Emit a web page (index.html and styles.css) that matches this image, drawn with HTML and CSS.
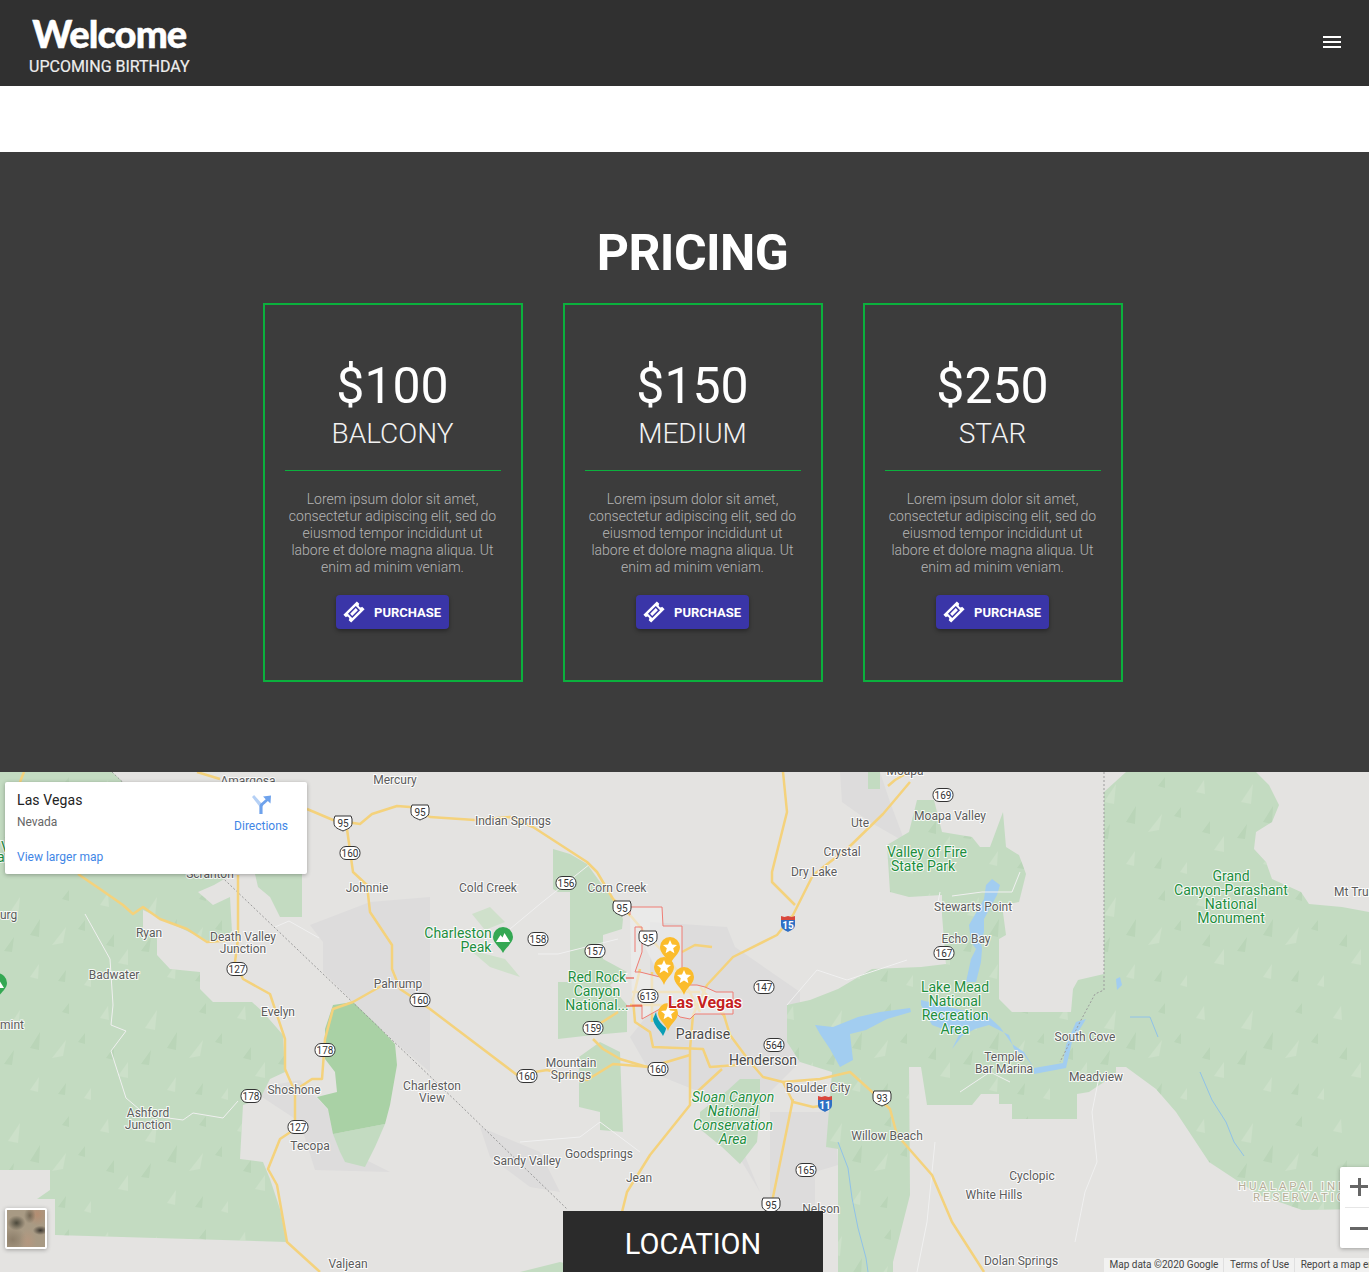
FILE: index.html
```html
<!DOCTYPE html>
<html lang="en">
<head>
  <meta charset="UTF-8">
  <title>Welcome - Upcoming Birthday</title>
  <link rel="stylesheet" href="styles.css">
</head>
<body>
  <header class="topbar">
    <div class="brand">
      <div class="brand-name">Welcome</div>
      <div class="brand-sub">UPCOMING BIRTHDAY</div>
    </div>
    <button class="menu-btn" aria-label="menu"><span></span><span></span><span></span></button>
  </header>

  <div class="spacer"></div>

  <section class="pricing">
    <h2>PRICING</h2>
    <div class="cards">
      <div class="card">
        <div class="price">$100</div>
        <div class="tier">BALCONY</div>
        <hr>
        <p>Lorem ipsum dolor sit amet, consectetur adipiscing elit, sed do eiusmod tempor incididunt ut labore et dolore magna aliqua. Ut enim ad minim veniam.</p>
        <button class="buy">
          <svg viewBox="0 0 24 24" width="24" height="24"><path transform="rotate(-45 12 12)" fill-rule="evenodd" d="M2.500 6.500H21.500V10a2 2 0 0 0 0 4V17.500H2.500V14a2 2 0 0 0 0-4z M6.500 9H17.500V15H6.500z M8 10.500V13.500H16V10.500z"/></svg>
          PURCHASE
        </button>
      </div>
      <div class="card">
        <div class="price">$150</div>
        <div class="tier">MEDIUM</div>
        <hr>
        <p>Lorem ipsum dolor sit amet, consectetur adipiscing elit, sed do eiusmod tempor incididunt ut labore et dolore magna aliqua. Ut enim ad minim veniam.</p>
        <button class="buy">
          <svg viewBox="0 0 24 24" width="24" height="24"><path transform="rotate(-45 12 12)" fill-rule="evenodd" d="M2.500 6.500H21.500V10a2 2 0 0 0 0 4V17.500H2.500V14a2 2 0 0 0 0-4z M6.500 9H17.500V15H6.500z M8 10.500V13.500H16V10.500z"/></svg>
          PURCHASE
        </button>
      </div>
      <div class="card">
        <div class="price">$250</div>
        <div class="tier">STAR</div>
        <hr>
        <p>Lorem ipsum dolor sit amet, consectetur adipiscing elit, sed do eiusmod tempor incididunt ut labore et dolore magna aliqua. Ut enim ad minim veniam.</p>
        <button class="buy">
          <svg viewBox="0 0 24 24" width="24" height="24"><path transform="rotate(-45 12 12)" fill-rule="evenodd" d="M2.500 6.500H21.500V10a2 2 0 0 0 0 4V17.500H2.500V14a2 2 0 0 0 0-4z M6.500 9H17.500V15H6.500z M8 10.500V13.500H16V10.500z"/></svg>
          PURCHASE
        </button>
      </div>
    </div>
  </section>

  <section class="map">
    <svg class="map-canvas" viewBox="0 0 1369 500" width="1369" height="500">
      <defs>
        <pattern id="shade" width="137" height="113" patternUnits="userSpaceOnUse">
          <path class="hill-lt" d="M8 30 20 12l-2 20zM52 60l14-18-3 16zM100 20l8-12 1 14zM118 78l10-14v16zM30 92l9-13-1 15zM84 100l7-10v12z"/>
          <path class="hill-dk" d="M30 50 40 34l-1 18zM4 66 14 52l-2 15zM78 44l7-9v11zM106 60l8-11v13zM58 96l8-11-1 12zM62 14l7-9v11z"/>
        </pattern>
        <polygon id="parkWest" points="0,0 112,0 125,12 233,102 214,113 198,120 213,133 230,125 232,160 210,170 143,138 143,157 157,160 157,183 170,197 200,200 200,217 213,230 252,230 263,240 283,263 285,300 270,307 260,327 243,333 240,387 263,390 270,407 280,437 287,470 55,463 55,427 37,427 50,418 50,398 0,398"/>
        <polygon id="parkEast" points="1104,20 1126,0 1256,0 1269,13 1279,33 1272,50 1256,60 1254,77 1266,90 1272,107 1301,120 1309,132 1342,135 1369,140 1369,437 1302,438 1259,423 1209,390 1176,340 1156,317 1126,295 1116,295 1116,302 1089,320 1077,322 1077,347 1012,347 1012,332 999,332 999,322 981,322 972,333 927,333 921,295 909,295 910,423 893,490 893,500 838,500 838,377 826,375 832,300 800,290 787,270 787,233 810,228 838,217 872,197 921,195 946,192 942,143 942,123 909,125 890,120 887,73 909,60 917,28 934,28 942,60 972,65 980,75 990,75 1003,40 1006,75 1019,83 1026,102 1019,130 1002,133 1006,163 999,167 999,227 1012,240 1071,240 1073,217 1078,208 1104,202"/>
        <g id="pin">
          <path class="pin-body" d="M0 18C-2 11-10 7-10 0a10 10 0 0 1 20 0C10 7 2 11 0 18z"/>
          <path class="pin-star" d="m0-7 2 4.600 5 .4-3.800 3.300 1.200 4.900L0 3.600l-4.400 2.600 1.200-4.900L-7-2l5-.4z"/>
        </g>
      </defs>

      <rect class="land" width="1369" height="500"/>

      <!-- grey built up areas -->
      <polygon class="urban" points="310,153 370,130 430,125 430,300 395,270 353,230 323,200 323,170"/>
      <polygon class="urban" points="262,315 300,308 330,340 350,380 390,400 315,398 300,350 262,325"/>
      <polygon class="urban" points="31,354 90,358 108,390 60,375 33,370"/>
      <polygon class="urban" points="650,150 727,155 735,175 800,220 800,290 770,320 735,360 760,420 700,320 650,300 630,265 650,240"/>
      <polygon class="urban" points="770,340 835,340 838,393 815,400 815,450 770,450"/>
      <polygon class="urban" points="840,0 880,0 890,30 905,70 870,50 842,30"/>
      <polygon class="urban" points="480,355 540,380 560,420 530,415 490,385"/>

      <!-- parks -->
      <use href="#parkWest" class="park"/>
      <use href="#parkWest" class="park-shade"/>
      <use href="#parkEast" class="park"/>
      <use href="#parkEast" class="park-shade"/>
      <polygon class="park" points="255,102 302,102 302,145 280,145 270,125 258,115"/>
      <polygon class="park" points="553,77 570,82 587,92 600,110 613,127 623,147 622,157 603,163 603,187 627,200 610,213 627,233 627,260 593,263 558,267 558,210 570,210 570,120 558,120 553,117"/>
      <polygon class="park" points="579,285 600,270 620,280 623,360 600,358 600,340 579,335"/>
      <polygon class="park" points="728,318 740,307 760,307 760,340 757,370 740,392 722,375 700,357 700,340"/>
      <polygon class="park" points="868,0 880,0 880,17 868,17"/>
      <polygon class="park" points="333,362 385,352 375,375 365,395 345,390 340,380"/>
      <polygon class="park" points="0,0 40,0 30,20 0,20"/>
      <polygon class="park" points="520,500 560,490 600,500"/>
      <polygon class="park-faint" points="472,142 490,135 505,150 485,158"/>
      <polygon class="park-faint" points="470,178 505,187 520,205 490,195"/>
      <polygon class="park-dark" points="333,233 353,230 377,253 395,272 397,293 390,333 385,352 333,362 328,337 317,325 337,320 335,300 325,287 325,257"/>

      <!-- water -->
      <polygon class="water" points="815,253 833,255 858,245 880,240 910,236 911,240 887,247 866,258 850,262 853,288 840,295 830,277 820,262"/>
      <polygon class="water" points="992,107 1000,113 997,123 984,147 984,160 981,170 982,177 981,190 976,210 966,210 971,187 976,177 971,170 969,153 984,127 986,113"/>
      <polygon class="water" points="921,233 932,253 959,263 952,277 962,264 975,257 989,253 1009,263 1014,277 1024,283 1034,296 1034,302 1066,296 1072,270 1086,247 1076,250 1066,273 1063,291 1034,296 1024,280 1012,272 1000,255 989,245 921,228"/>
      <polygon class="water" points="1116,207 1120,205 1122,213 1117,218"/>
      <path class="creek" d="M1200 300l12 28 14 22 8 20 10 14M1130 245h20l8 20M838 370l10 26 4 30 6 30 8 30 2 14"/>

      <!-- state line -->
      <path class="border" d="M112 0 460 333 567 437M1104 0V218l-9 4-15 28-20 40"/>

      <!-- minor roads -->
      <path class="minor" d="M85 142l25 45 3 46-2 20 15 6-15 20 15 47 20 17 37 5 10-7 30 5 15-17M275 155l14-6 30 17M590 92l-50 40-30 25M538 182h20l60-15M940 120l-4 20M787 233l30-35 30 10 60-20M935 370l-8 80-10 50M960 320l30-20 20 10M1100 300l-8 40 5 50-12 30-10 50M1020 100l-8 20h-30l-30 4M640 380l-40-30-20 15-60 5"/>

      <!-- highways -->
      <g class="roads">
        <path d="M307 37 333 48 360 52 372 42 397 34 410 35 430 45 475 48 510 45 533 55 587 90 597 100 613 127 630 143 647 163 663 180 682 205 700 240"/>
        <path d="M347 57 353 100 367 113 370 140 392 173 392 197 400 217 430 237 517 303 547 298 587 308 613 292 650 295 690 283"/>
        <path d="M238 103V167L235 190 243 207 270 222 285 267 285 297 295 320V357L280 367 268 397 277 413 287 470 320 500"/>
        <path d="M78 102 100 117 123 133 133 142 143 135 160 147 187 157 207 170 235 168"/>
        <path d="M383 213 353 230 333 237 325 267 322 307 312 307 300 315"/>
        <path d="M197 0 220 7M20 10 24 0"/>
        <path d="M910 10 883 42 847 77 813 103 793 143 777 163 733 185 707 213 693 243 690 277V333L650 383 627 420 622 440"/>
        <path d="M783 0 787 40 772 100V110L795 133"/>
        <path d="M640 197 633 227 635 250 650 260 653 275 703 277 710 295 737 293"/>
        <path d="M723 240 730 263 750 290 763 305 783 310 793 330 813 335 827 333"/>
        <path d="M783 310 820 307 850 300 870 318 890 337 897 363 932 403 952 450 984 500"/>
        <path d="M793 327 772 430"/>
        <path d="M593 267 603 277 620 287 647 295M593 256 618 240"/>
        <path d="M632 220H700M630 233H725M682 180 695 173 712 175M652 200V250M722 297 697 320M700 215 725 245"/>
        <path d="M909 0 895 8 888 14"/>
      </g>

      <!-- city limits -->
      <path class="limits" d="M630 143 630 135H662L663 154H682V213H697L705 215 716 220H733V242H695L690 247 680 245 667 233 642 247V233H632M635 155H642V180L635 200H640L660 205M635 155V180"/>
      <path class="limits-hard" d="M626 206h8M626 234h16"/>

      <!-- labels -->
      <g class="label">
        <text x="248" y="13">Amargosa</text><text x="395" y="12">Mercury</text>
        <text x="513" y="53">Indian Springs</text><text x="860" y="55">Ute</text>
        <text x="842" y="84">Crystal</text><text x="814" y="104">Dry Lake</text>
        <text x="950" y="48">Moapa Valley</text><text x="905" y="3">Moapa</text>
        <text x="367" y="120">Johnnie</text><text x="488" y="120">Cold Creek</text>
        <text x="617" y="120">Corn Creek</text><text x="210" y="106">Scranton</text>
        <text x="973" y="139">Stewarts Point</text><text x="966" y="171">Echo Bay</text>
        <text x="149" y="165">Ryan</text><text x="243" y="169">Death Valley</text>
        <text x="243" y="181">Junction</text><text x="114" y="207">Badwater</text>
        <text x="398" y="216">Pahrump</text><text x="278" y="244">Evelyn</text>
        <text class="start" x="0" y="147">urg</text><text class="start" x="0" y="257">mint</text>
        <text x="818" y="320">Boulder City</text><text x="1004" y="289">Temple</text>
        <text x="1004" y="301">Bar Marina</text><text x="1085" y="269">South Cove</text>
        <text x="1096" y="309">Meadview</text><text x="294" y="322">Shoshone</text>
        <text x="432" y="318">Charleston</text><text x="432" y="330">View</text>
        <text x="571" y="295">Mountain</text><text x="571" y="307">Springs</text>
        <text x="148" y="345">Ashford</text><text x="148" y="357">Junction</text>
        <text x="310" y="378">Tecopa</text><text x="527" y="393">Sandy Valley</text>
        <text x="599" y="386">Goodsprings</text><text x="639" y="410">Jean</text>
        <text x="887" y="368">Willow Beach</text><text x="1032" y="408">Cyclopic</text>
        <text x="994" y="427">White Hills</text><text x="1021" y="493">Dolan Springs</text>
        <text x="821" y="441">Nelson</text><text x="348" y="496">Valjean</text>
        <text class="start" x="1334" y="124">Mt Trumbull</text>
      </g>
      <g class="label label-big">
        <text x="703" y="267">Paradise</text><text x="763" y="293">Henderson</text>
      </g>
      <g class="label label-park">
        <text class="start" x="1" y="80">V</text><text class="start" x="-3" y="90">a</text>
        <text x="458" y="166">Charleston</text><text x="476" y="180">Peak</text>
        <text x="597" y="210">Red Rock</text><text x="597" y="224">Canyon</text><text x="597" y="238">National...</text>
        <text x="927" y="85">Valley of Fire</text><text x="923" y="99">State Park</text>
        <text x="1231" y="109">Grand</text><text x="1231" y="123">Canyon-Parashant</text><text x="1231" y="137">National</text><text x="1231" y="151">Monument</text>
        <text x="955" y="220">Lake Mead</text><text x="955" y="234">National</text><text x="955" y="248">Recreation</text><text x="955" y="262">Area</text>
        <text class="ital" x="733" y="330">Sloan Canyon</text><text class="ital" x="733" y="344">National</text><text class="ital" x="733" y="358">Conservation</text><text class="ital" x="733" y="372">Area</text>
      </g>
      <g class="label label-res">
        <text class="start" x="1238" y="418">HUALAPAI IND</text><text class="start" x="1253" y="429">RESERVATIC</text>
      </g>

      <!-- route shields -->
      <g class="shield">
        <g transform="translate(343 51)"><path d="M-8-7h16l1 3v4c0 5-5 6-9 8-4-2-9-3-9-8v-4z"/><text y="3.5">95</text></g>
        <g transform="translate(420 40)"><path d="M-8-7h16l1 3v4c0 5-5 6-9 8-4-2-9-3-9-8v-4z"/><text y="3.5">95</text></g>
        <g transform="translate(622 136)"><path d="M-8-7h16l1 3v4c0 5-5 6-9 8-4-2-9-3-9-8v-4z"/><text y="3.5">95</text></g>
        <g transform="translate(648 166)"><path d="M-8-7h16l1 3v4c0 5-5 6-9 8-4-2-9-3-9-8v-4z"/><text y="3.5">95</text></g>
        <g transform="translate(771 433)"><path d="M-8-7h16l1 3v4c0 5-5 6-9 8-4-2-9-3-9-8v-4z"/><text y="3.5">95</text></g>
        <g transform="translate(882 326)"><path d="M-8-7h16l1 3v4c0 5-5 6-9 8-4-2-9-3-9-8v-4z"/><text y="3.5">93</text></g>
        <g transform="translate(350 81)"><rect x="-10" y="-6.5" width="20" height="13" rx="6"/><text y="3.5">160</text></g>
        <g transform="translate(420 228)"><rect x="-10" y="-6.5" width="20" height="13" rx="6"/><text y="3.5">160</text></g>
        <g transform="translate(527 304)"><rect x="-10" y="-6.5" width="20" height="13" rx="6"/><text y="3.5">160</text></g>
        <g transform="translate(658 297)"><rect x="-10" y="-6.5" width="20" height="13" rx="6"/><text y="3.5">160</text></g>
        <g transform="translate(237 197)"><rect x="-10" y="-6.5" width="20" height="13" rx="6"/><text y="3.5">127</text></g>
        <g transform="translate(298 355)"><rect x="-10" y="-6.5" width="20" height="13" rx="6"/><text y="3.5">127</text></g>
        <g transform="translate(325 278)"><rect x="-10" y="-6.5" width="20" height="13" rx="6"/><text y="3.5">178</text></g>
        <g transform="translate(251 324)"><rect x="-10" y="-6.5" width="20" height="13" rx="6"/><text y="3.5">178</text></g>
        <g transform="translate(566 111)"><rect x="-10" y="-6.5" width="20" height="13" rx="6"/><text y="3.5">156</text></g>
        <g transform="translate(538 167)"><rect x="-10" y="-6.5" width="20" height="13" rx="6"/><text y="3.5">158</text></g>
        <g transform="translate(595 179)"><rect x="-10" y="-6.5" width="20" height="13" rx="6"/><text y="3.5">157</text></g>
        <g transform="translate(648 224)"><rect x="-10" y="-6.5" width="20" height="13" rx="6"/><text y="3.5">613</text></g>
        <g transform="translate(593 256)"><rect x="-10" y="-6.5" width="20" height="13" rx="6"/><text y="3.5">159</text></g>
        <g transform="translate(764 215)"><rect x="-10" y="-6.5" width="20" height="13" rx="6"/><text y="3.5">147</text></g>
        <g transform="translate(774 273)"><rect x="-10" y="-6.5" width="20" height="13" rx="6"/><text y="3.5">564</text></g>
        <g transform="translate(806 398)"><rect x="-10" y="-6.5" width="20" height="13" rx="6"/><text y="3.5">165</text></g>
        <g transform="translate(943 23)"><rect x="-10" y="-6.5" width="20" height="13" rx="6"/><text y="3.5">169</text></g>
        <g transform="translate(944 181)"><rect x="-10" y="-6.5" width="20" height="13" rx="6"/><text y="3.5">167</text></g>
      </g>
      <g class="inter">
        <g transform="translate(788 152)"><path class="i-blue" d="M-7-6H7V1C7 5 3 6 0 8-3 6-7 5-7 1z"/><path class="i-red" d="M-7-8-3.500-7 0-8 3.500-7 7-8V-4H-7z"/><text y="5">15</text></g>
        <g transform="translate(825 332)"><path class="i-blue" d="M-7-6H7V1C7 5 3 6 0 8-3 6-7 5-7 1z"/><path class="i-red" d="M-7-8-3.500-7 0-8 3.500-7 7-8V-4H-7z"/><text y="5">11</text></g>
      </g>

      <!-- green mountain marker -->
      <g transform="translate(503 167)">
        <path class="poi" d="M0 14C-3 8-10 4-10-2a10 10 0 0 1 20 0C10 4 3 8 0 14z"/>
        <path class="poi-mark" d="m-7 3 4.500-7 2 2.500L1.500-6 7 3z"/>
      </g>
      <g transform="translate(-3 213)">
        <path class="poi" d="M0 14C-3 8-10 4-10-2a10 10 0 0 1 20 0C10 4 3 8 0 14z"/>
        <path class="poi-mark" d="m-7 3 4.500-7 2 2.500L1.500-6 7 3z"/>
      </g>

      <!-- pins -->
      <path class="pin-teal" d="M656 240 653 247C654 254 660 258 663 264 665 260 666 258 666 256 661 252 657 248 656 240z"/>
      <use href="#pin" x="670" y="175"/>
      <use href="#pin" x="664" y="195"/>
      <use href="#pin" x="684" y="205"/>
      <use href="#pin" x="668" y="241"/>
      <text class="city" x="705" y="236">Las Vegas</text>
    </svg>

    <div class="place-card">
      <div class="place-info">
        <div class="place-name">Las Vegas</div>
        <div class="place-state">Nevada</div>
        <a class="place-link">View larger map</a>
      </div>
      <a class="place-dir">
        <svg viewBox="0 0 18 18" width="19" height="19">
          <path class="dir-lt" d="M0 2 2 0 10 9 8 12z"/>
          <path class="dir-dk" d="M7 18V11.500C7 8 10 7 13 4L10.500 1.500 18 .5 17.500 8 15 5.800C12.500 8.500 10 9.500 10 12V18z"/>
        </svg>
        Directions
      </a>
    </div>

    <div class="sat-thumb"><span></span></div>

    <div class="zoom-ctl">
      <div class="zoom-btn"><span class="zoom-h"></span><span class="zoom-v"></span></div>
      <div class="zoom-btn"><span class="zoom-h"></span></div>
    </div>

    <div class="attrib">
      <span>Map data ©2020 Google</span>
      <span>Terms of Use</span>
      <span>Report a map error</span>
    </div>

    <div class="location-tag">LOCATION</div>
  </section>
</body>
</html>
```

FILE: styles.css
```css
html, body {
  margin: 0;
  padding: 0;
  height: 1272px;
  overflow: hidden;
}

body {
  font-family: Roboto, "Liberation Sans", sans-serif;
  background: #fff;
}

.topbar {
  height: 86px;
  background: #303030;
  display: flex;
  justify-content: space-between;
  align-items: center;
  padding: 0 28px 0 29px;
  box-sizing: border-box;
}

.brand-name {
  font-family: Lato, sans-serif;
  font-weight: 900;
  font-size: 38px;
  line-height: 40px;
  letter-spacing: -0.9px;
  -webkit-text-stroke: 0.5px #fff;
  color: #fff;
  margin-top: 13px;
  text-align: center;
}

.brand-sub {
  font-size: 16px;
  font-weight: 400;
  -webkit-text-stroke: 0.2px #eee;
  line-height: 19px;
  color: #eee;
  margin-top: 4px;
  margin-bottom: 10px;
}

.menu-btn {
  background: none;
  border: none;
  padding: 0;
  width: 18px;
  display: flex;
  flex-direction: column;
  gap: 3px;
  margin-top: -2px;
}

.menu-btn span {
  display: block;
  height: 2px;
  background: #fff;
}

.spacer {
  height: 66px;
}

.pricing {
  height: 620px;
  background: #3c3c3c;
  box-sizing: border-box;
  padding: 72px 0 0 16px;
}

.pricing h2 {
  margin: 0 0 20px;
  text-align: center;
  color: #fff;
  font-size: 50px;
  font-weight: 700;
  letter-spacing: -0.6px;
  line-height: 59px;
}

.cards {
  display: flex;
  justify-content: center;
  gap: 40px;
}

.card {
  width: 260px;
  height: 379px;
  box-sizing: border-box;
  border: 2px solid #0bb03d;
  padding: 51px 20px 0;
  text-align: center;
}

.price {
  color: #fff;
  font-size: 50px;
  line-height: 60px;
}

.tier {
  color: #f2f2f2;
  font-size: 28px;
  font-weight: 300;
  line-height: 36px;
  margin-top: 0;
}

.card hr {
  border: none;
  border-top: 1px solid #0bb03d;
  height: 0;
  margin: 18px 0 20px;
}

.card p {
  margin: 0;
  color: #b5b5b5;
  font-size: 14px;
  font-weight: 300;
  line-height: 17px;
}

.buy {
  margin-top: 19px;
  height: 34px;
  width: 113px;
  display: inline-flex;
  align-items: center;
  gap: 8px;
  padding: 0 0 0 6px;
  background: #3a35a8;
  color: #fff;
  border: none;
  border-radius: 4px;
  font-family: Roboto, sans-serif;
  font-size: 13px;
  font-weight: 700;
  box-shadow: 0 2px 4px rgba(0,0,0,0.35);
}

.buy svg {
  fill: #fff;
  flex: none;
}

.map {
  position: relative;
  height: 500px;
  overflow: hidden;
  background: #e4e3e1;
}

.map-canvas {
  display: block;
}

.land { fill: #e4e3e1; }
.urban { fill: #dddcdc; }
.park { fill: #c3dbc1; }
.park-dark { fill: #a9d1a5; }
.park-faint { fill: #cfe0cb; }
.park-shade { fill: url(#shade); opacity: 0.45; }
.hill-lt { fill: #d6e6d2; }
.hill-dk { fill: #aecdad; }
.water { fill: #a2cdf0; }
.creek { fill: none; stroke: #90c2e8; stroke-width: 1; }
.border { fill: none; stroke: #9b9b9b; stroke-width: 1; stroke-dasharray: 2 2; }
.minor { fill: none; stroke: #f0f0f0; stroke-width: 1; }
.roads path { fill: none; stroke: #f4d27c; stroke-width: 2.5; stroke-linejoin: round; }
.limits { fill: #eeeeee; fill-opacity: 0.6; stroke: #ef7d74; stroke-width: 1; }
.limits-hard { fill: none; stroke: #e8402f; stroke-width: 1; }

.label text {
  font-family: Roboto, sans-serif;
  font-size: 12px;
  fill: #5c5c5c;
  text-anchor: middle;
  stroke: #fff;
  stroke-width: 2px;
  stroke-opacity: 0.85;
  paint-order: stroke;
}

.label text.start { text-anchor: start; }
.label-big text { font-size: 14px; fill: #4a4a4a; }
.label-park text { font-size: 14px; fill: #1e8e3e; }
.label-park text.ital { font-style: italic; }
.label-res text { fill: #b6ae98; letter-spacing: 2.9px; font-size: 11.5px; }

.shield rect, .shield path { fill: #fff; stroke: #333; stroke-width: 1; }
.shield text {
  font-family: Roboto, sans-serif;
  font-size: 10px;
  fill: #333;
  text-anchor: middle;
}

.i-blue { fill: #2f6fc4; }
.i-red { fill: #d9473c; }
.inter text {
  font-family: Roboto, sans-serif;
  font-size: 10px;
  font-weight: 700;
  fill: #fff;
  text-anchor: middle;
}

.poi { fill: #34a853; }
.poi-mark { fill: #fff; }
.pin-body { fill: #fbbc2c; }
.pin-star { fill: #fff; }
.pin-teal { fill: #0a9db5; }

.city {
  font-family: Roboto, sans-serif;
  font-size: 16px;
  font-weight: 700;
  fill: #c5221f;
  text-anchor: middle;
  stroke: #fff;
  stroke-width: 2px;
  paint-order: stroke;
}

.place-card {
  position: absolute;
  left: 5px;
  top: 10px;
  width: 302px;
  height: 92px;
  background: #fff;
  box-shadow: 0 1px 4px rgba(0,0,0,0.3);
  border-radius: 2px;
  display: flex;
  justify-content: space-between;
  box-sizing: border-box;
  padding: 10px 19px 0 12px;
}

.place-name {
  font-size: 14px;
  font-weight: 400;
  letter-spacing: 0.1px;
  color: #222;
  line-height: 17px;
}

.place-state {
  font-size: 12px;
  color: #666;
  line-height: 14px;
  margin-top: 6px;
}

.place-link {
  display: block;
  font-size: 12px;
  color: #3f86e6;
  line-height: 14px;
  margin-top: 21px;
}

.place-dir {
  display: flex;
  flex-direction: column;
  align-items: center;
  font-size: 12px;
  line-height: 14px;
  color: #3f86e6;
  padding-top: 3px;
  gap: 5px;
}

.dir-lt { fill: #b5d0f5; }
.dir-dk { fill: #6ea2ec; }

.sat-thumb {
  position: absolute;
  left: 5px;
  top: 436px;
  width: 42px;
  height: 41px;
  box-sizing: border-box;
  border: 2px solid #fff;
  border-radius: 2px;
  box-shadow: 0 1px 4px rgba(0,0,0,0.3);
  background: #9a8a74;
}

.sat-thumb span {
  display: block;
  height: 100%;
  background:
    radial-gradient(ellipse at 25% 35%, rgba(45,45,35,0.75) 0, transparent 22%),
    radial-gradient(ellipse at 88% 55%, rgba(30,28,25,0.8) 0, transparent 16%),
    radial-gradient(ellipse at 60% 15%, rgba(70,65,50,0.55) 0, transparent 18%),
    radial-gradient(ellipse at 80% 12%, rgba(185,135,105,0.7) 0, transparent 25%),
    radial-gradient(ellipse at 55% 85%, rgba(185,150,125,0.7) 0, transparent 30%),
    radial-gradient(ellipse at 15% 80%, rgba(130,115,95,0.7) 0, transparent 30%),
    #a89a84;
}

.zoom-ctl {
  position: absolute;
  left: 1340px;
  top: 395px;
  width: 40px;
  height: 81px;
  background: #fff;
  box-shadow: 0 1px 4px rgba(0,0,0,0.3);
  border-radius: 2px;
}

.zoom-btn {
  position: relative;
  height: 40px;
}

.zoom-btn + .zoom-btn {
  border-top: 1px solid #e6e6e6;
  margin: 0 5px;
}

.zoom-btn span { position: absolute; background: #666; }
.zoom-h { left: 10px; top: 18px; width: 18px; height: 3px; }
.zoom-v { left: 18px; top: 11px; width: 3px; height: 18px; }
.zoom-btn + .zoom-btn .zoom-h { left: 5px; top: 19px; }

.attrib {
  position: absolute;
  left: 1104px;
  right: 0;
  bottom: 0;
  height: 14px;
  display: flex;
  background: rgba(245,245,245,0.8);
  font-size: 10px;
  line-height: 14px;
  color: #444;
  white-space: nowrap;
  overflow: hidden;
}

.attrib span { padding: 0 5px 0 5.5px; border-right: 1px solid #e0e0e0; }

.location-tag {
  position: absolute;
  left: 563px;
  top: 439px;
  width: 260px;
  height: 61px;
  background: #2b2b2b;
  color: #fff;
  font-size: 29px;
  line-height: 66px;
  text-align: center;
}
```
